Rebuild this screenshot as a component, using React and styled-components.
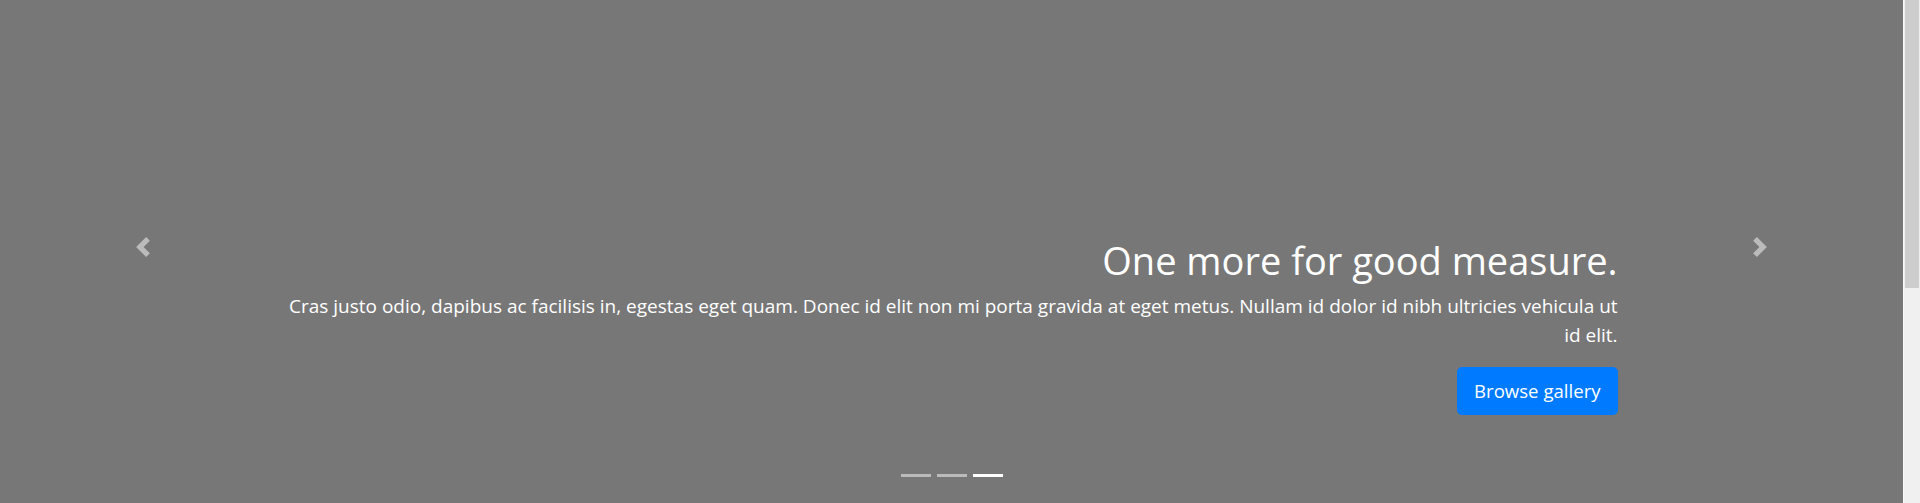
import { useState } from 'react';
import styled, { createGlobalStyle } from 'styled-components';

const GlobalStyle = createGlobalStyle`
  html, body {
    margin: 0;
    padding: 0;
    background: #fff;
    overflow: hidden;
  }
  body {
    font-family: "Open Sans", "Noto Sans", sans-serif;
    color: #212529;
  }
`;

const Frame = styled.div`
  display: flex;
  height: 100vh;
  overflow: hidden;
`;

const Page = styled.main`
  flex: 1;
  min-width: 0;
  overflow: hidden;
`;

const ScrollTrack = styled.div`
  width: 17px;
  flex-shrink: 0;
  display: flex;
  flex-direction: column;
  align-items: center;
  background: #f0f0f0;
  border-left: 1px solid #fafafa;
  box-sizing: border-box;
`;

const ScrollThumb = styled.div`
  width: 14px;
  height: 288px;
  background: #cdcdcd;
`;

const Carousel = styled.div`
  position: relative;
  height: 512px;
  margin-top: -9px;
  margin-bottom: 64px;
  background: #777;
  overflow: hidden;
`;

const Caption = styled.div`
  position: absolute;
  left: 15%;
  right: 15%;
  bottom: 52px;
  z-index: 10;
  padding: 20px 0;
  color: #fff;
  text-align: right;
`;

const Title = styled.h1`
  margin: 0 0 8px;
  font-size: 38px;
  font-weight: 400;
  line-height: 1.2;
`;

const Text = styled.p`
  margin: 0 0 ${(p) => (p.$last ? '16px' : '18px')};
  font-size: 19px;
  line-height: 28.5px;
`;

const Button = styled.a`
  display: inline-block;
  padding: 8px 16px;
  font-size: 18.6px;
  line-height: 30px;
  color: #fff;
  background: #007bff;
  border: 1px solid #007bff;
  border-radius: 4.8px;
  text-decoration: none;
  cursor: pointer;
`;

const Control = styled.a`
  position: absolute;
  top: 0;
  bottom: 0;
  ${(p) => (p.$side === 'left' ? 'left: 0;' : 'right: 0;')}
  width: 15%;
  display: flex;
  align-items: center;
  justify-content: center;
  opacity: 0.5;
  z-index: 5;
  cursor: pointer;
`;

const Indicators = styled.ol`
  position: absolute;
  left: 0;
  right: 0;
  bottom: 0;
  z-index: 15;
  display: flex;
  justify-content: center;
  margin: 0 15% 16px;
  padding: 0;
  list-style: none;
`;

const Dot = styled.li`
  box-sizing: content-box;
  width: 30px;
  height: 3px;
  margin: 0 3px;
  background: #fff;
  background-clip: padding-box;
  border-top: 10px solid transparent;
  border-bottom: 10px solid transparent;
  opacity: ${(p) => (p.$active ? 1 : 0.5)};
  cursor: pointer;
`;

const Below = styled.section`
  height: 311px;
`;

function Chevron({ dir }) {
  const d = dir === 'prev'
    ? 'M5.25 0l-4 4 4 4 1.5-1.5L4.25 4l2.5-2.5L5.25 0z'
    : 'M2.75 0l-1.5 1.5L3.75 4l-2.5 2.5L2.75 8l4-4-4-4z';
  return (
    <svg width="20" height="20" viewBox="0 0 8 8" fill="#fff">
      <path d={d} />
    </svg>
  );
}

export default function App() {
  const [active, setActive] = useState(2);

  return (
    <>
      <GlobalStyle />
      <Frame>
        <Page>
          <Carousel>
            <Indicators>
              {[0, 1, 2].map((i) => (
                <Dot key={i} $active={i === active} onClick={() => setActive(i)} />
              ))}
            </Indicators>
            <Caption>
              <Title>One more for good measure.</Title>
              <Text>
                Cras justo odio, dapibus ac facilisis in, egestas eget quam. Donec id elit non mi porta gravida at eget metus. Nullam id dolor id nibh ultricies vehicula ut id elit.
              </Text>
              <Text $last>
                <Button role="button">Browse gallery</Button>
              </Text>
            </Caption>
            <Control $side="left" onClick={() => setActive((active + 2) % 3)}>
              <Chevron dir="prev" />
            </Control>
            <Control $side="right" onClick={() => setActive((active + 1) % 3)}>
              <Chevron dir="next" />
            </Control>
          </Carousel>
          <Below />
        </Page>
        <ScrollTrack>
          <ScrollThumb />
        </ScrollTrack>
      </Frame>
    </>
  );
}
